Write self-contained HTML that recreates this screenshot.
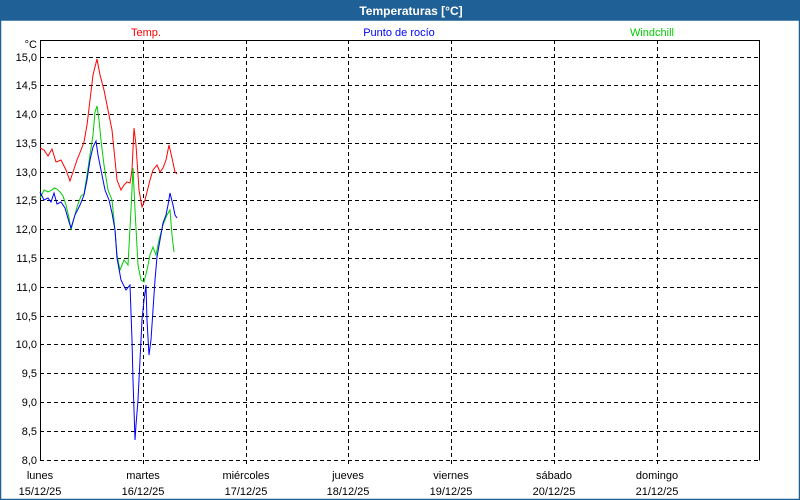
<!DOCTYPE html>
<html><head><meta charset="utf-8"><style>
html,body{margin:0;padding:0;}
body{width:800px;height:500px;overflow:hidden;background:#fff;font-family:"Liberation Sans",sans-serif;}
</style></head><body>
<svg width="800" height="500" xmlns="http://www.w3.org/2000/svg" style="display:block">
<rect x="0" y="0" width="800" height="500" fill="#fff"/>
<rect x="0" y="0" width="800" height="20" fill="#1f6096"/>
<rect x="0.5" y="20" width="799" height="479.5" fill="none" stroke="#1f6096" stroke-width="1.5"/>
<text x="411" y="15" fill="#fff" font-size="12" font-weight="bold" text-anchor="middle">Temperaturas [°C]</text>
<g font-size="11" text-anchor="middle">
<text x="146" y="36" fill="#f00">Temp.</text>
<text x="399" y="36" fill="#00f">Punto de rocío</text>
<text x="652" y="36" fill="#0c0">Windchill</text>
</g>
<g stroke="#000" stroke-width="1" stroke-dasharray="4,3" fill="none">
<path d="M40 57.5H760M40 85.5H760M40 114.5H760M40 143.5H760M40 172.5H760M40 200.5H760M40 229.5H760M40 258.5H760M40 287.5H760M40 316.5H760M40 344.5H760M40 373.5H760M40 402.5H760M40 431.5H760M40 460.5H760"/>
<path d="M143.5 40V465M246.5 40V465M348.5 40V465M451.5 40V465M554.5 40V465M657.5 40V465"/>
</g>
<path d="M40.5 460V40.5H759.5V460.5" stroke="#000" fill="none"/>
<g font-size="11" fill="#000" text-anchor="end">
<text x="37" y="48">°C</text>
<text x="37" y="61">15,0</text><text x="37" y="89">14,5</text><text x="37" y="118">14,0</text>
<text x="37" y="147">13,5</text><text x="37" y="176">13,0</text><text x="37" y="204">12,5</text>
<text x="37" y="233">12,0</text><text x="37" y="262">11,5</text><text x="37" y="291">11,0</text>
<text x="37" y="320">10,5</text><text x="37" y="348">10,0</text><text x="37" y="377">9,5</text>
<text x="37" y="406">9,0</text><text x="37" y="435">8,5</text><text x="37" y="464">8,0</text>
</g>
<g font-size="11" fill="#000" text-anchor="middle">
<text x="40" y="479">lunes</text><text x="40" y="495">15/12/25</text>
<text x="143" y="479">martes</text><text x="143" y="495">16/12/25</text>
<text x="246" y="479">miércoles</text><text x="246" y="495">17/12/25</text>
<text x="348" y="479">jueves</text><text x="348" y="495">18/12/25</text>
<text x="451" y="479">viernes</text><text x="451" y="495">19/12/25</text>
<text x="554" y="479">sábado</text><text x="554" y="495">20/12/25</text>
<text x="657" y="479">domingo</text><text x="657" y="495">21/12/25</text>
</g>
<g fill="none" stroke-width="1">
<polyline stroke="#f00" points="40,148 44,150 48,156 52,149 56,162 61,160 66,170 70,181 73,172 77,160 81,150 84,142 87,125 90,100 93,75 97,59 100,75 104,90 108,110 112,130 115,160 117,180 121,190 124,185 127,182 130,183 132,170 134,128 136,145 139,190 142,207 145,200 150,180 153,170 157,165 160,172 163,168 166,160 169,145 172,158 175,172 177,174"/>
<polyline stroke="#0c0" points="40,198 44,190 48,192 52,190 54,188 57,189 60,192 63,196 66,205 69,218 71,230 73,222 77,207 81,196 84,194 87,175 90,155 93,135 95,112 97,106 99,120 101,140 104,165 108,190 112,200 115,230 117,255 120,270 124,260 128,265 131,210 133,168 135,210 138,265 141,280 144,282 147,270 150,255 153,247 156,255 159,240 163,225 167,215 170,210 172,235 174,252"/>
<polyline stroke="#00f" points="40,192 44,200 48,198 51,202 54,193 57,204 61,202 65,208 69,222 71,228 75,215 80,205 84,195 87,180 90,160 93,147 96,141 98,155 101,170 105,190 109,200 112,213 115,230 117,258 121,280 126,290 130,285 132,340 133,380 134,410 135,440 136,425 138,400 140,360 142,320 144,300 146,285 147,320 149,355 151,340 153,310 155,280 157,257 160,240 163,223 166,215 168,205 170,193 173,205 175,215 177,218"/>
</g>
</svg>
</body></html>
